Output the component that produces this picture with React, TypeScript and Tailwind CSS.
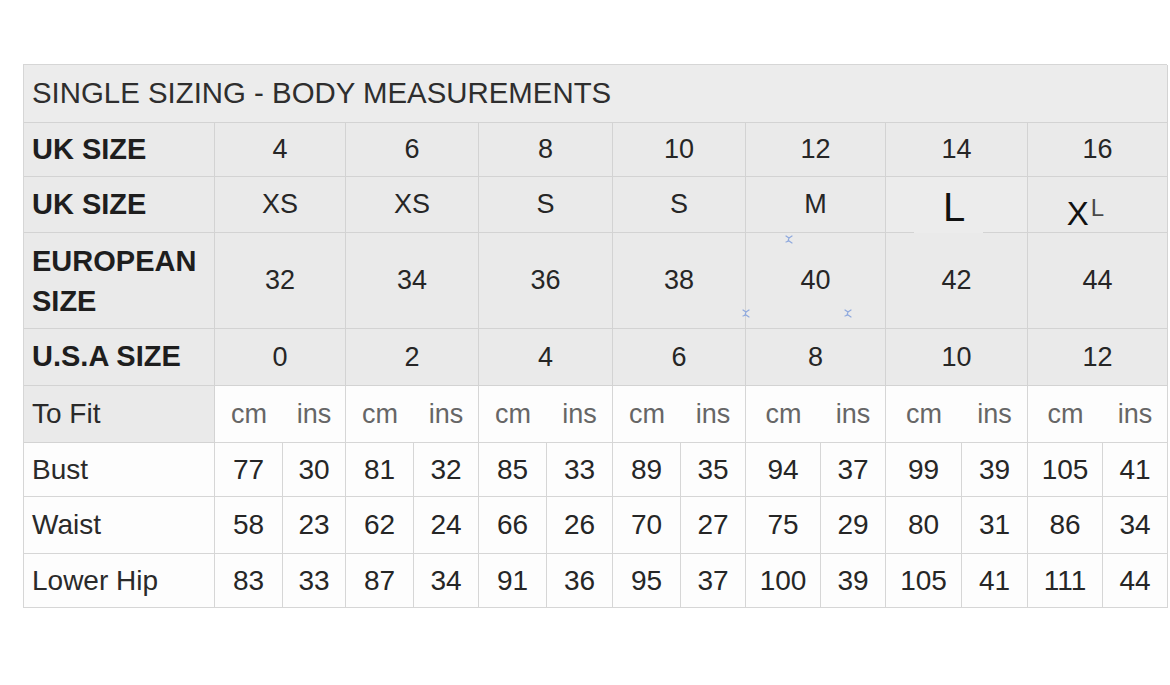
import React from "react";

const sizes = [
  { uk: "4", letter: "XS", eu: "32", usa: "0" },
  { uk: "6", letter: "XS", eu: "34", usa: "2" },
  { uk: "8", letter: "S", eu: "36", usa: "4" },
  { uk: "10", letter: "S", eu: "38", usa: "6" },
  { uk: "12", letter: "M", eu: "40", usa: "8" },
  { uk: "14", letter: "L", eu: "42", usa: "10" },
  { uk: "16", letter: "XL", eu: "44", usa: "12" },
];

const measurements = [
  { label: "Bust", values: [77, 30, 81, 32, 85, 33, 89, 35, 94, 37, 99, 39, 105, 41] },
  { label: "Waist", values: [58, 23, 62, 24, 66, 26, 70, 27, 75, 29, 80, 31, 86, 34] },
  { label: "Lower Hip", values: [83, 33, 87, 34, 91, 36, 95, 37, 100, 39, 105, 41, 111, 44] },
];

const grayCell = "bg-[#eaeaea] border-r border-b border-[#d3d3d3]";
const whiteCell = "bg-[#fdfdfd] border-r border-b border-[#d6d6d6]";

function BlueMark() {
  return (
    <svg width="10" height="11" viewBox="0 0 10 11" fill="none">
      <path d="M2 2 L5 4 L8 2 M5 4 L4 7 M2 8 L5 7 L8 9" stroke="#8fa9de" strokeWidth="1.2" strokeLinecap="round" />
    </svg>
  );
}

function LabelCell({ children, gray = true }: { children: React.ReactNode; gray?: boolean }) {
  return (
    <div className={`${gray ? grayCell : whiteCell} flex items-center pl-[8px] text-[#1e1e1e]`}>
      {children}
    </div>
  );
}

export default function App() {
  return (
    <div className="min-h-screen bg-white pt-[64px] pl-[23px] font-['Liberation_Sans',Arial,sans-serif]">
      <div className="grid w-[1144px] grid-cols-[191px_68px_63px_68px_65px_68px_66px_68px_65px_75px_65px_76px_66px_75px_65px] grid-rows-[58px_54px_56px_96px_57px_57px_54px_57px_54px] border-t border-l border-[#d6d6d6]">
        {/* Title */}
        <div className="col-span-15 flex items-center bg-[#ececec] border-r border-b border-[#d3d3d3] pl-[8px] text-[29.4px] text-[#2e2e2e]">
          SINGLE SIZING - BODY MEASUREMENTS
        </div>

        {/* UK size numbers */}
        <LabelCell>
          <span className="text-[29px] font-bold">UK SIZE</span>
        </LabelCell>
        {sizes.map((s) => (
          <div key={"uk" + s.uk} className={`${grayCell} col-span-2 flex items-center justify-center text-[27px] text-[#262626]`}>
            {s.uk}
          </div>
        ))}

        {/* UK size letters */}
        <LabelCell>
          <span className="text-[29px] font-bold">UK SIZE</span>
        </LabelCell>
        {sizes.slice(0, 5).map((s) => (
          <div key={"l" + s.uk} className={`${grayCell} col-span-2 flex items-center justify-center text-[27px] text-[#262626]`}>
            {s.letter}
          </div>
        ))}
        <div className="col-span-2 flex flex-col bg-[#ececec] border-r border-[#d3d3d3]">
          <div className="flex flex-1 items-center justify-center pt-[4px] pr-[5px] text-[40px] leading-none text-[#111]">L</div>
          <div className="flex h-px">
            <div className="w-[28px] bg-[#d3d3d3]" />
            <div className="w-[69px]" />
            <div className="flex-1 bg-[#d3d3d3]" />
          </div>
        </div>
        <div className={`${grayCell} col-span-2 flex items-center justify-center pt-[18px] pr-[24px]`}>
          <span className="text-[33px] leading-none text-[#111]">X</span>
          <span className="mt-[-12px] ml-[2px] text-[24px] leading-none text-[#4a4a4a]">L</span>
        </div>

        {/* European */}
        <LabelCell>
          <span className="text-[29px] font-bold leading-[40px]">
            EUROPEAN
            <br />
            SIZE
          </span>
        </LabelCell>
        {sizes.map((s) => (
          <div key={"eu" + s.eu} className={`${grayCell} relative col-span-2 flex items-center justify-center text-[27px] text-[#262626]`}>
            {s.eu}
            {s.eu === "40" && (
              <>
                <span className="absolute left-[38px] top-[1px]">
                  <BlueMark />
                </span>
                <span className="absolute left-[-5px] top-[75px]">
                  <BlueMark />
                </span>
                <span className="absolute left-[97px] top-[75px]">
                  <BlueMark />
                </span>
              </>
            )}
          </div>
        ))}

        {/* USA */}
        <LabelCell>
          <span className="text-[29px] font-bold">U.S.A SIZE</span>
        </LabelCell>
        {sizes.map((s) => (
          <div key={"us" + s.usa} className={`${grayCell} col-span-2 flex items-center justify-center text-[27px] text-[#262626]`}>
            {s.usa}
          </div>
        ))}

        {/* To Fit */}
        <LabelCell>
          <span className="text-[28px] text-[#2a2a2a]">To Fit</span>
        </LabelCell>
        {sizes.map((s, i) => (
          <div key={"fit" + i} className={`${whiteCell} col-span-2 grid grid-cols-subgrid items-center text-[27px] text-[#666]`}>
            <span className="text-center">cm</span>
            <span className="text-center">ins</span>
          </div>
        ))}

        {/* Measurements */}
        {measurements.map((m) => (
          <React.Fragment key={m.label}>
            <LabelCell gray={false}>
              <span className="text-[28px] text-[#2a2a2a]">{m.label}</span>
            </LabelCell>
            {m.values.map((v, i) => (
              <div key={m.label + i} className={`${whiteCell} flex items-center justify-center text-[28px] text-[#262626]`}>
                {v}
              </div>
            ))}
          </React.Fragment>
        ))}
      </div>
    </div>
  );
}
